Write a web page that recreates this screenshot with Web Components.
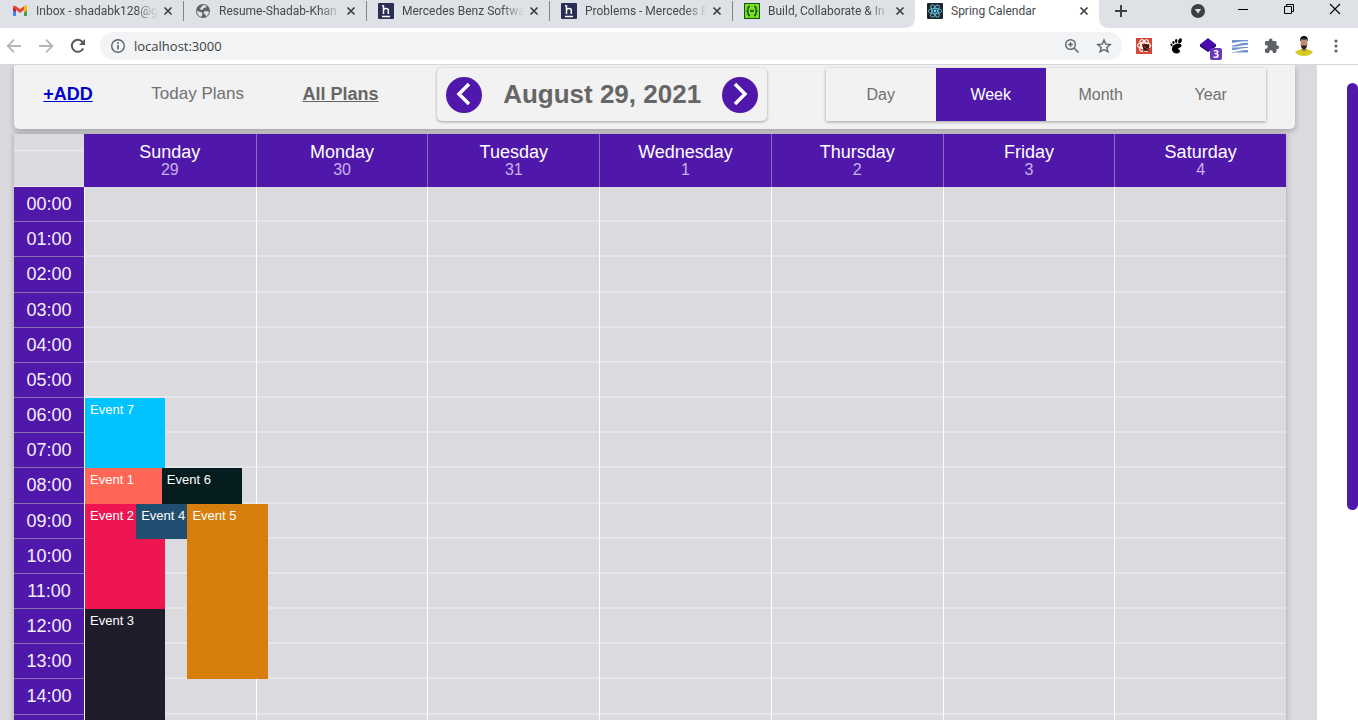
<!DOCTYPE html>
<html lang="en">
<head>
<meta charset="utf-8">
<title>Spring Calendar</title>
<style>
  html, body { margin: 0; height: 100%; overflow: hidden; background: #fff; font-family: "Liberation Sans", Arial, sans-serif; }
</style>
</head>
<body>
<browser-window></browser-window>

<script>
const define = (name, html) => customElements.define(name, class extends HTMLElement {
  constructor() {
    super();
    this.attachShadow({ mode: 'open' });
  }
  connectedCallback() {
    this.shadowRoot.innerHTML = '<style>*{box-sizing:border-box}button{margin:0;padding:0;border:0;background:none;font:inherit;color:inherit;cursor:pointer}svg{display:block;flex:none}</style>' +
      (typeof html === 'function' ? html(this) : html);
  }
});

const icons = {
  gmail: '<svg width="16" height="16" viewBox="0 0 16 16"><path d="M1 4v9h3V7z" fill="#4285f4"/><path d="M12 7v6h3V4z" fill="#34a853"/><path d="M1 3.500 4 5.500v4L1 7z" fill="#c5221f"/><path d="M12 5.500 15 3.500V7l-3 2.500z" fill="#fbbc04"/><path d="M1 4.500C1 2.500 2.800 2.300 4 3.200L8 6.300 12 3.200C13.200 2.300 15 2.500 15 4.500L8 10z" fill="#ea4335"/><path d="M12 3.200C13.200 2.300 15 2.500 15 4.500V7l-3 2.300z" fill="#fbbc04"/></svg>',
  globe: '<svg width="16" height="16" viewBox="0 0 16 16"><circle cx="8" cy="8" r="7" fill="#5f6368"/><path d="M2 7.500 5 9l2 .5.500 2-1.500 2.500C3.500 13 2 11 2 7.500zM8 2l3.500.8-.5 1.700-2.500.5-.5 1.500-2 .5L5 5.500zM9 8.500l3-.5 2 1c-.4 2-1.500 3.500-3 4.500l-1-2.500-1.500-.5z" fill="#dee1e6"/></svg>',
  hrank: '<svg width="16" height="16" viewBox="0 0 16 16"><rect width="16" height="16" rx="1" fill="#2b2e54"/><path d="M5.500 2.500v8.500M5.500 7C6.500 4.800 10.300 4.800 10.300 7.500V11M4 2.800h1.500M4 13.500h8" stroke="#fff" stroke-width="1.500" fill="none"/></svg>',
  code: '<svg width="16" height="16" viewBox="0 0 16 16"><rect x=".5" y=".5" width="15" height="15" fill="#6fe21b" stroke="#1f4a1c"/><path d="M6 3.500H5L4 5v2L3 8l1 1v2l1 1.500h1M10 3.500h1L12 5v2l1 1-1 1v2l-1 1.500h-1M6 8h4" stroke="#173d1a" stroke-width="1.300" fill="none"/></svg>',
  react: '<svg width="16" height="16" viewBox="0 0 16 16"><rect width="16" height="16" rx="1" fill="#20232a"/><g fill="none" stroke="#61bfdc" stroke-width=".9"><ellipse cx="8" cy="8" rx="6.800" ry="2.600"/><ellipse cx="8" cy="8" rx="6.800" ry="2.600" transform="rotate(60 8 8)"/><ellipse cx="8" cy="8" rx="6.800" ry="2.600" transform="rotate(120 8 8)"/></g><circle cx="8" cy="8" r="1.400" fill="#61dafb"/></svg>',
  close: '<svg width="16" height="16" viewBox="0 0 16 16"><path d="M4.500 4.500l7 7M11.500 4.500l-7 7" stroke="#3c4043" stroke-width="1.700"/></svg>',
  plus: '<svg width="16" height="16" viewBox="0 0 16 16"><path d="M8 2v12M2 8h12" stroke="#3c4043" stroke-width="2"/></svg>',
  drop: '<svg width="16" height="16" viewBox="0 0 16 16"><circle cx="8" cy="8" r="7" fill="#3c4043"/><path d="M4.800 6h6.400L8 10.500z" fill="#dee1e6"/></svg>',
  min: '<svg width="12" height="12" viewBox="0 0 12 12"><path d="M1 6.500h10" stroke="#000"/></svg>',
  max: '<svg width="12" height="12" viewBox="0 0 12 12"><path d="M1.500 3.500h7v7h-7zM3.500 3.500v-2h7v7h-2" fill="none" stroke="#000"/></svg>',
  quit: '<svg width="12" height="12" viewBox="0 0 12 12"><path d="M1 1l10 10M11 1L1 11" stroke="#000" stroke-width="1.100"/></svg>',
  back: '<svg width="16" height="16" viewBox="0 0 16 16"><path d="M15 8H2M8 1.700 1.700 8 8 14.300" fill="none" stroke="#b4b6b9" stroke-width="1.800"/></svg>',
  forward: '<svg width="16" height="16" viewBox="0 0 16 16"><path d="M1 8h13M8 1.700 14.300 8 8 14.300" fill="none" stroke="#b4b6b9" stroke-width="1.800"/></svg>',
  reload: '<svg width="16" height="16" viewBox="0 0 16 16"><path d="M13.200 10.500A6 6 0 1 1 12.500 4" fill="none" stroke="#55595d" stroke-width="2"/><path d="M15 1v6H9z" fill="#55595d"/></svg>',
  info: '<svg width="16" height="16" viewBox="0 0 16 16"><circle cx="8" cy="8" r="6.300" fill="none" stroke="#5f6368" stroke-width="1.400"/><path d="M8 7v4.500M8 4.300V6" stroke="#5f6368" stroke-width="1.600"/></svg>',
  zoom: '<svg width="16" height="16" viewBox="0 0 16 16"><circle cx="6.500" cy="6.500" r="4.800" fill="none" stroke="#5f6368" stroke-width="1.400"/><path d="M10.200 10.200l4.300 4.300M6.500 4.200v4.600M4.200 6.500h4.600" stroke="#5f6368" stroke-width="1.500"/></svg>',
  star: '<svg width="16" height="16" viewBox="0 0 16 16"><path d="M8 2l1.700 4.100 4.500.4-3.400 2.900 1 4.400L8 11.500l-3.800 2.300 1-4.400-3.400-2.900 4.500-.4z" fill="none" stroke="#5f6368" stroke-width="1.400"/></svg>',
  atom: '<svg width="16" height="16" viewBox="0 0 16 16"><rect width="16" height="16" fill="#d34836"/><g fill="none" stroke="#fff" stroke-width="1.100"><ellipse cx="8" cy="7.500" rx="6.500" ry="2.800"/><ellipse cx="8" cy="7.500" rx="6.500" ry="2.800" transform="rotate(60 8 7.500)"/><ellipse cx="8" cy="7.500" rx="6.500" ry="2.800" transform="rotate(120 8 7.500)"/></g><ellipse cx="10" cy="9.500" rx="3" ry="3.500" fill="#351612"/><path d="M6 6l7 7M13 6l-6 7" stroke="#351612"/><circle cx="9" cy="9" r=".8" fill="#d34836"/><circle cx="11" cy="11" r=".8" fill="#d34836"/></svg>',
  foot: '<svg width="16" height="16" viewBox="0 0 16 16"><path d="M8 6c3-1 5.500 0 5.500 1.800 0 2-3 1.700-3.300 3C10 12 12 11.200 12 13c0 1.500-1.500 2.500-3.300 2.500C5 15.500 3.800 12.500 4 10.500 4.200 8 5.500 6.800 8 6z"/><ellipse cx="12" cy="2.800" rx="1.700" ry="2.600" transform="rotate(20 12 2.800)"/><ellipse cx="8.200" cy="3" rx="1.200" ry="1.900"/><ellipse cx="5.500" cy="4.500" rx="1.100" ry="1.600" transform="rotate(-15 5.500 4.500)"/><ellipse cx="3.500" cy="6.800" rx="1" ry="1.400" transform="rotate(-25 3.500 6.800)"/></svg>',
  layers: '<svg width="16" height="16" viewBox="0 0 16 16"><path d="M0 8.500 8 14l8-5.500V6H0z" fill="#27066b"/><path d="M8 0l8 6.500-8 6-8-6z" fill="#4a0bad"/></svg>',
  waves: '<svg width="16" height="16" viewBox="0 0 16 16"><path d="M0 2h16v1.500C10 2.500 5 4.500 0 5zM0 7.500C6 7 10 4 16 5v2C10 6.500 6 9 0 8.500zM0 9.500c6 .5 10-1 16-.5v1C10 9.500 6 12 0 12zM0 14c6 0 10-2.500 16-2v2.500H0z" fill="#6f94ce"/></svg>',
  puzzle: '<svg width="16" height="16" viewBox="0 0 16 16"><path d="M13.300 7.500h-.8V4.300c0-.8-.6-1.300-1.300-1.300H8.500v-.7a1.800 1.800 0 0 0-3.600 0V3H2.200C1.500 3 1 3.500 1 4.300v2.600h.8a1.900 1.900 0 0 1 0 3.800H1v2.900c0 .8.500 1.400 1.200 1.400h2.900v-.8a1.900 1.900 0 0 1 3.800 0v.8h2.300c.7 0 1.300-.6 1.300-1.400v-2.500h.8a1.800 1.800 0 0 0 0-3.600z" fill="#5f6368"/></svg>',
  avatar: '<svg width="20" height="20" viewBox="0 0 20 20"><path d="M1 16c2-2 5-2 6-3h6c1 1 4 1 6 3-2 2.500-5 4-9 4s-7-1.500-9-4z" fill="#d6cb25"/><path d="M8 10h4v4l-2 1.500L8 14z" fill="#9a6b50"/><ellipse cx="10" cy="7" rx="3.300" ry="5" fill="#bd8b6d"/><path d="M6.300 6C5.500 1.500 7.500 0 10 0s4.500 1.500 3.700 6L12.800 3.500H7.200z" fill="#171717"/><path d="M6.700 8 8 10l2-.7 2 .7 1.300-2c0 3-1.300 5-3.300 5s-3.300-2-3.300-5z" fill="#2a1d18"/></svg>',
  dots: '<svg width="16" height="16" viewBox="0 0 16 16" fill="#5f6368"><circle cx="8" cy="3" r="1.600"/><circle cx="8" cy="8" r="1.600"/><circle cx="8" cy="13" r="1.600"/></svg>'
};

define('browser-tab', el => `
<style>
  :host { display: block; flex: 0 1 183px; min-width: 0; }
  :host([active]) { flex-basis: 184px; background: #fff; position: relative; }
  :host([active])::before, :host([active])::after { content: ""; position: absolute; bottom: 0; width: 8px; height: 8px; }
  :host([active])::before { right: 100%; background: radial-gradient(circle at 0 0, transparent 7px, #fff 8px); }
  :host([active])::after { left: 100%; background: radial-gradient(circle at 100% 0, transparent 7px, #fff 8px); }
  .tab { display: flex; align-items: center; height: 22px; padding: 0 7px 0 12px; position: relative; }
  :host([divided]) .tab::before { content: ""; position: absolute; left: 0; top: 1px; width: 1px; height: 20px; background: #808387; }
  .title { flex: 1; min-width: 0; margin: 0 2px 0 8px; overflow: hidden; white-space: nowrap; font-size: 12px; line-height: 20px; color: #45494d; }
  :host(:not([whole])) .title { -webkit-mask-image: linear-gradient(to right, #000 calc(100% - 22px), transparent); mask-image: linear-gradient(to right, #000 calc(100% - 22px), transparent); }
</style>
<div class="tab">${icons[el.getAttribute('icon')]}<span class="title"><slot></slot></span><button aria-label="Close tab">${icons.close}</button></div>`);

define('tab-strip', `
<style>
  :host { display: flex; height: 28px; background: #dee1e6; }
  .new { width: 44px; height: 22px; display: grid; place-items: center; }
  .window { margin-left: auto; display: flex; align-items: flex-start; }
  .window button { width: 46px; height: 17px; display: grid; place-items: center; }
  .window .search { width: 44px; height: 22px; }
</style>
<browser-tab icon="gmail">Inbox - shadabk128@g</browser-tab>
<browser-tab icon="globe" divided>Resume-Shadab-Khan</browser-tab>
<browser-tab icon="hrank" divided>Mercedes Benz Softwa</browser-tab>
<browser-tab icon="hrank" divided>Problems - Mercedes B</browser-tab>
<browser-tab icon="code" divided>Build, Collaborate &amp; In</browser-tab>
<browser-tab icon="react" active whole>Spring Calendar</browser-tab>
<button class="new" aria-label="New tab">${icons.plus}</button>
<div class="window">
  <button class="search" aria-label="Search tabs">${icons.drop}</button>
  <button aria-label="Minimize">${icons.min}</button>
  <button aria-label="Restore">${icons.max}</button>
  <button aria-label="Close">${icons.quit}</button>
</div>`);

define('browser-toolbar', `
<style>
  :host { display: flex; align-items: center; gap: 4px; height: 37px; padding: 0 8px 0 0; background: #fff; border-bottom: 1px solid #d5d7da; box-sizing: border-box; }
  button { width: 28px; height: 28px; display: grid; place-items: center; flex: none; position: relative; }
  .address { flex: 1; min-width: 0; height: 28px; margin: 0 4px; padding: 0 4px 0 10px; border-radius: 14px; background: #f1f3f4; display: flex; align-items: center; gap: 4px; }
  .address svg { margin-right: 4px; }
  .address button svg { margin: 0; }
  input { flex: 1; min-width: 0; border: 0; padding: 0; outline: 0; background: none; font: 13px/20px "Open Sans", "Noto Sans", sans-serif; color: #3c4043; }
  .badge { position: absolute; right: 0; bottom: 0; width: 12px; height: 12px; border-radius: 2px; background: #673ab7; color: #fff; font: bold 10px/12px "Open Sans", sans-serif; text-align: center; }
</style>
<button aria-label="Back">${icons.back}</button>
<button aria-label="Forward">${icons.forward}</button>
<button aria-label="Reload">${icons.reload}</button>
<div class="address">${icons.info}<input aria-label="Address" value="localhost:3000">
  <button aria-label="Zoom">${icons.zoom}</button><button aria-label="Bookmark">${icons.star}</button></div>
<button aria-label="React tools">${icons.atom}</button>
<button aria-label="Gnome extension">${icons.foot}</button>
<button aria-label="Layers">${icons.layers}<span class="badge">3</span></button>
<button aria-label="Waves">${icons.waves}</button>
<button aria-label="Extensions">${icons.puzzle}</button>
<button aria-label="Profile">${icons.avatar}</button>
<button aria-label="Menu">${icons.dots}</button>`);

define('date-picker', `
<style>
  :host { display: flex; align-items: center; justify-content: space-between; box-sizing: border-box; height: 53px; width: 330px; padding: 0 9px; border-radius: 5px; box-shadow: 0 1px 3px rgba(0,0,0,.35); }
  button { width: 36px; height: 36px; border-radius: 50%; background: #5018aa; display: grid; place-items: center; }
  h1 { margin: 0; padding-bottom: 2px; font-size: 26px; line-height: 32px; color: #666; }
</style>
<button aria-label="Previous week"><svg width="24" height="26" viewBox="0 0 24 26"><path d="M17 2 7 12l10 10" fill="none" stroke="#fff" stroke-width="3.500"/></svg></button>
<h1>August 29, 2021</h1>
<button aria-label="Next week"><svg width="24" height="26" viewBox="0 0 24 26"><path d="M7 2l10 10L7 22" fill="none" stroke="#fff" stroke-width="3.500"/></svg></button>`);

define('view-switch', `
<style>
  :host { display: flex; height: 53px; box-shadow: 0 1px 3px rgba(0,0,0,.35); }
  button { width: 110px; font-size: 16px; color: #707070; }
  button[aria-pressed="true"] { background: #5018aa; color: #fff; }
</style>
<button>Day</button><button aria-pressed="true">Week</button><button>Month</button><button>Year</button>`);

define('calendar-header', `
<style>
  :host { display: flex; align-items: center; justify-content: space-around; padding: 3px 0 8px; background: #f2f2f2; border-radius: 0 0 5px 5px; box-shadow: 0 2px 6px rgba(0,0,0,.25); }
  a, span { padding-bottom: 2px; line-height: 24px; }
  a { font-size: 18px; font-weight: bold; color: #666; }
  a.add { color: #0000ce; }
  span { font-size: 17px; color: #707070; }
</style>
<a class="add" href="#add">+ADD</a>
<span>Today Plans</span>
<a href="#all">All Plans</a>
<date-picker></date-picker>
<view-switch></view-switch>`);

define('calendar-event', el => {
  const start = +el.getAttribute('start') + 1, end = +el.getAttribute('end') + 1;
  return `
<style>
  :host { display: block; z-index: 1; grid-area: ${start} / 1 / ${end} / 2; margin-left: ${el.getAttribute('lane') * 15}%; width: 47%; padding: 4px 5px; background: ${el.getAttribute('color')}; color: #fff; font-size: 13px; line-height: 15px; box-sizing: border-box; white-space: nowrap; }
</style><slot></slot>`;
});

const days = [['Sunday', 29], ['Monday', 30], ['Tuesday', 31], ['Wednesday', 1], ['Thursday', 2], ['Friday', 3], ['Saturday', 4]];
const hours = Array.from({ length: 24 }, (_, h) => String(h).padStart(2, '0') + ':00');

define('week-grid', `
<style>
  :host { display: grid; grid-template-columns: 70px minmax(0, 1fr); margin: 5px 9px 0 0; background: #dadadf; box-shadow: 0 0 6px rgba(0,0,0,.25); position: relative; }
  .corner { background: linear-gradient(#ececef, #ececef) 0 16px / 100% 1px no-repeat #dadadf; border-bottom: 1px solid #efe9f5; }
  .days { display: grid; grid-template-columns: repeat(7, minmax(0, 1fr)); height: 53px; background: #5018aa; }
  .day { padding-top: 9px; text-align: center; line-height: 18px; color: #fff; }
  .day + .day { border-left: 1px solid #8a6cb4; }
  .day b { display: block; font-size: 18px; font-weight: normal; }
  .day small { display: block; font-size: 16px; color: #c9b0ee; }
  .hours, .cells, .column { display: grid; grid-template-rows: repeat(24, minmax(0, 1fr)); height: 844px; }
  .hours { background: #5018aa; color: #f5effc; }
  .hours time { display: flex; align-items: center; justify-content: center; font-size: 18px; line-height: 18px; border-bottom: 1px solid #8a6cb4; }
  .cells { grid-template-rows: none; grid-template-columns: repeat(7, minmax(0, 1fr)); }
  .column { border-left: 1px solid #fff; }
  .column i { grid-column: 1; border-bottom: 2px solid #e6e6ea; }
</style>
<div class="corner"></div>
<div class="days">${days.map(([d, n]) => `<div class="day"><b>${d}</b><small>${n}</small></div>`).join('')}</div>
<div class="hours">${hours.map(h => `<time>${h}</time>`).join('')}</div>
<div class="cells">${days.map((_, c) => `<div class="column">${hours.map((_, h) => `<i style="grid-row:${h + 1}"></i>`).join('')}${c ? '' : `
  <calendar-event start="6" end="8" lane="0" color="#00c3ff">Event 7</calendar-event>
  <calendar-event start="8" end="9" lane="0" color="#ff6655">Event 1</calendar-event>
  <calendar-event start="8" end="9" lane="3" color="#061d20">Event 6</calendar-event>
  <calendar-event start="9" end="12" lane="0" color="#ef1550">Event 2</calendar-event>
  <calendar-event start="9" end="10" lane="2" color="#204e70">Event 4</calendar-event>
  <calendar-event start="9" end="14" lane="4" color="#d77e0c">Event 5</calendar-event>
  <calendar-event start="12" end="16" lane="0" color="#1f1d2c">Event 3</calendar-event>`}</div>`).join('')}</div>`);

define('scroll-track', `
<style>
  :host { display: flex; flex: 0 0 41px; justify-content: flex-end; align-items: flex-start; padding-top: 18px; background: #fff; }
  div { width: 11px; height: 67%; border-radius: 6px; background: #5018aa; }
</style><div></div>`);

define('browser-window', `
<style>
  :host { display: flex; flex-direction: column; height: 100vh; overflow: hidden; }
  tab-strip, browser-toolbar { flex: none; }
  tab-strip { font-family: Roboto, "Noto Sans", sans-serif; }
  .page { flex: 1; min-height: 0; display: flex; overflow: hidden; }
  main { flex: 1; min-width: 0; padding: 0 22px 0 14px; background: #dadadf; overflow: hidden; }
</style>
<tab-strip></tab-strip>
<browser-toolbar></browser-toolbar>
<div class="page">
  <main><calendar-header></calendar-header><week-grid></week-grid></main>
  <scroll-track></scroll-track>
</div>`);
</script>
</body>
</html>
